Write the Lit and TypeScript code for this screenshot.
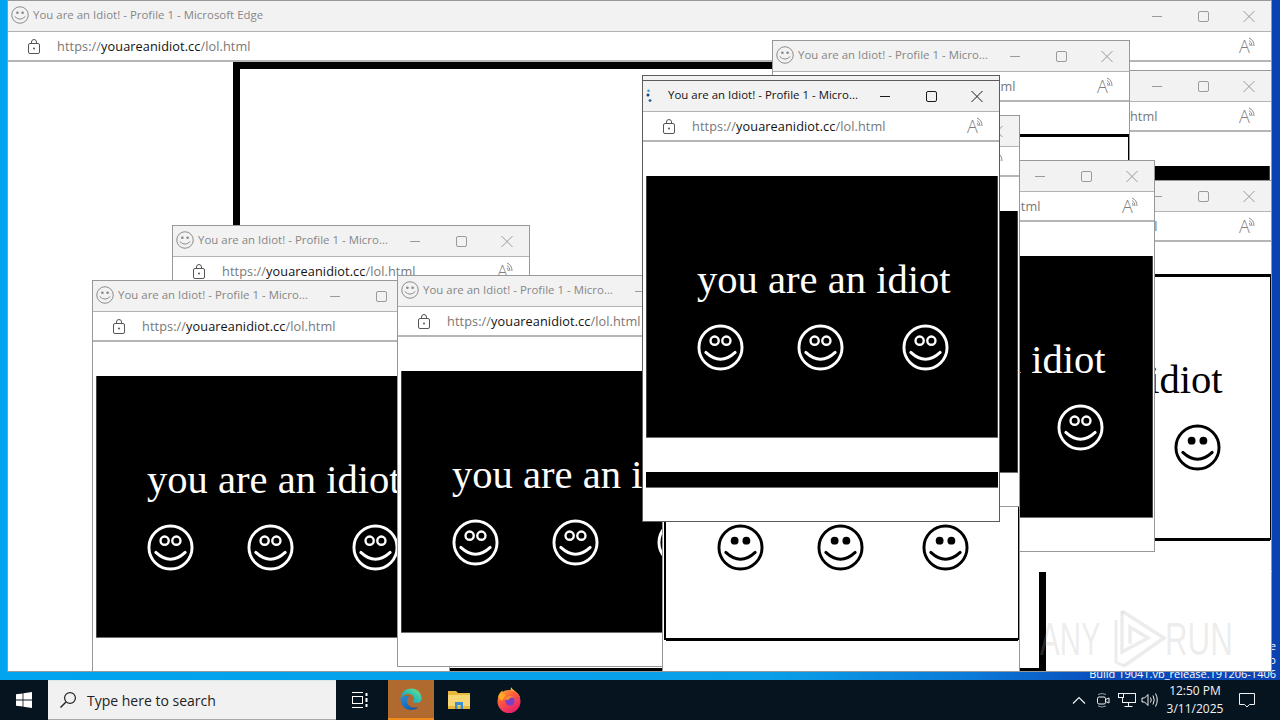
import { LitElement, html, css, svg } from 'lit';
import { customElement, property } from 'lit/decorators.js';

const smile = (filled: boolean) => svg`
  <circle cx="24" cy="24" r="22" fill="none" stroke="currentColor" stroke-width="3"/>
  ${filled
    ? svg`<circle cx="18" cy="17" r="4" fill="currentColor"/><circle cx="30" cy="17" r="4" fill="currentColor"/>`
    : svg`<circle cx="18" cy="17" r="4.2" fill="none" stroke="currentColor" stroke-width="2.4"/><circle cx="30" cy="17" r="4.2" fill="none" stroke="currentColor" stroke-width="2.4"/>`}
  <path d="M9 29 Q24 43 39 29" fill="none" stroke="currentColor" stroke-width="3" stroke-linecap="round"/>
`;

@customElement('idiot-window')
export class IdiotWindow extends LitElement {
  static styles = css`
    :host { display: block; position: absolute; }
    .win {
      width: 100%; height: 100%; box-sizing: border-box; overflow: hidden;
      background: #fff; border: 1px solid #989898;
      font-family: 'Open Sans', sans-serif;
    }
    .win.active { border-color: #5c5c5c; }
    .win.open { border-bottom-color: transparent; }
    .title {
      height: 31px; box-sizing: border-box; background: #f2f2f2;
      border-bottom: 1px solid #b3b3b3;
      display: flex; align-items: center; color: #868686; font-size: 11.4px;
    }
    .active .title { color: #111; }
    .fav { width: 18px; height: 18px; margin: 0 0 2px 3px; color: #8a8a8a; flex: none; }
    .spin { width: 18px; height: 18px; margin-left: 3px; flex: none; }
    .title-text { margin: 0 0 4px 4px; white-space: nowrap; flex: 1; letter-spacing: .03px; }
    .ctl { width: 46px; height: 30px; flex: none; color: #9a9a9a; }
    .active .ctl { color: #1a1a1a; }
    .addr {
      height: 30px; box-sizing: border-box; border-bottom: 2px solid #b5b5b5;
      display: flex; align-items: center; background: #fff;
    }
    .lock { width: 14px; height: 16px; margin-left: 19px; flex: none; color: #555; }
    .url {
      margin-left: 16px; flex: 1; font-size: 12.7px; color: #777; white-space: nowrap;
      letter-spacing: .1px;
    }
    .url b { font-weight: 400; color: #111; }
    .read { width: 21px; margin-right: 11px; flex: none; display: flex; color: #808080; }
    .read span { font-size: 18px; font-weight: 300; line-height: 19px; }
    .read svg { width: 8px; height: 11px; margin-left: -2px; }

    .panel {
      width: 352px; height: 262px; margin: 34px 0 0 3px; box-sizing: border-box;
      padding: 81px 0 0 51px; font-family: 'Liberation Serif', serif;
    }
    .panel.black { background: #000; color: #fff; box-shadow: inset 0 -1px 0 #6e6e6e, inset 1px 0 0 #444, inset -1px 0 0 #444; }
    .panel.white { background: #fff; color: #000; outline: 2px solid #000; box-shadow: 0 3px 0 #000, inset 0 1px 0 #000; }
    .say { font-size: 40.6px; line-height: 46px; white-space: nowrap; }
    .faces { display: flex; margin-top: 21px; }
    .faces svg { width: 47px; height: 47px; flex: none; }
    .faces svg:nth-child(2) { margin-left: 53px; }
    .faces svg:nth-child(3) { margin-left: 58px; }
    .bar { width: 352px; height: 16px; margin: 34px 0 0 3px; background: #000; box-shadow: inset 0 -1px 0 #6e6e6e; }

    .big-frame {
      margin: 0 0 0 225px; width: 813px; height: 613px; box-sizing: border-box;
      border: 7px solid #000; background: #fff;
    }
  `;

  @property() heading = '';
  @property({ type: Boolean }) active = false;
  @property({ type: Boolean }) loading = false;
  @property({ type: Boolean }) bare = false;
  @property({ type: Boolean }) open = false;
  @property() kind = 'black';
  @property({ type: Boolean }) trailing = false;

  private page() {
    if (this.kind === 'big') return html`<div class="big-frame"></div>`;
    const filled = this.kind === 'white';
    return html`
      <div class="panel ${this.kind}">
        <div class="say">you are an idiot</div>
        <div class="faces">
          <svg viewBox="0 0 48 48">${smile(filled)}</svg>
          <svg viewBox="0 0 48 48">${smile(filled)}</svg>
          <svg viewBox="0 0 48 48">${smile(filled)}</svg>
        </div>
      </div>
      ${this.trailing ? html`<div class="bar"></div>` : ''}
    `;
  }

  render() {
    if (this.bare) return html`<div class="win active"><div class="title"></div></div>`;
    return html`
      <div class="win ${this.active ? 'active' : ''} ${this.open ? 'open' : ''}">
        <div class="title">
          ${this.loading
            ? html`<svg class="spin" viewBox="0 0 18 18">
                <circle cx="2.500" cy="3.700" r="1.300" fill="#3a9bd8"/>
                <circle cx="2" cy="8" r="1.500" fill="#14487c"/>
                <circle cx="4" cy="13.600" r="1.400" fill="#1f5f9e"/>
              </svg>`
            : html`<svg class="fav" viewBox="0 0 48 48">
                <circle cx="24" cy="24" r="22" fill="none" stroke="currentColor" stroke-width="2.600"/>
                <circle cx="17" cy="18" r="3.600" fill="currentColor"/>
                <circle cx="31" cy="18" r="3.600" fill="currentColor"/>
                <path d="M10 28 Q24 42 38 28" fill="none" stroke="currentColor" stroke-width="2.600"/>
              </svg>`}
          <span class="title-text">${this.heading}</span>
          <svg class="ctl" viewBox="0 0 46 30"><path d="M19 15.500h10" stroke="currentColor" fill="none"/></svg>
          <svg class="ctl" viewBox="0 0 46 30"><rect x="19.500" y="10.500" width="10" height="10" rx="1.500" stroke="currentColor" fill="none"/></svg>
          <svg class="ctl" viewBox="0 0 46 30"><path d="M18.500 10l11 11M29.500 10l-11 11" stroke="currentColor" fill="none"/></svg>
        </div>
        <div class="addr">
          <svg class="lock" viewBox="0 0 14 16">
            <rect x="1.500" y="5.500" width="11" height="10" rx="1.500" fill="none" stroke="currentColor"/>
            <path d="M4.500 5.500V4a2.500 2.500 0 0 1 5 0v1.500" fill="none" stroke="currentColor"/>
            <circle cx="7" cy="10.500" r="1" fill="currentColor"/>
          </svg>
          <span class="url">https://<b>youareanidiot.cc</b>/lol.html</span>
          <span class="read"><span>A</span><svg viewBox="0 0 8 11">
            <path d="M1 1Q6 3 6 9M1 3.500Q4 5 4 9M1 6Q2.200 6.500 2.200 9" fill="none" stroke="currentColor" stroke-width=".9"/>
          </svg></span>
        </div>
        ${this.page()}
      </div>
    `;
  }
}

const SHORT = 'You are an Idiot! - Profile 1 - Micro...';

// back to front, as they are piled on the desktop
const WINDOWS = [
  { x: 7, y: 0, w: 1265, h: 672, kind: 'big', heading: 'You are an Idiot! - Profile 1 - Microsoft Edge' },
  { x: 914, y: 70, w: 358, h: 392, kind: 'black' },
  { x: 914, y: 180, w: 358, h: 392, kind: 'white', open: true },
  { x: 772, y: 40, w: 358, h: 392, kind: 'white' },
  { x: 172, y: 225, w: 358, h: 392, kind: 'black' },
  { x: 797, y: 160, w: 358, h: 392, kind: 'black' },
  { x: 92, y: 280, w: 358, h: 392, kind: 'black' },
  { x: 397, y: 275, w: 358, h: 392, kind: 'black' },
  { x: 662, y: 280, w: 358, h: 392, kind: 'white' },
  { x: 662, y: 115, w: 358, h: 392, kind: 'black' },
];

@customElement('app-root')
export class AppRoot extends LitElement {
  static styles = css`
    :host { display: block; width: 1280px; height: 720px; overflow: hidden; font-family: 'Open Sans', sans-serif; }
    .screen { display: flex; flex-direction: column; width: 1280px; height: 720px; }
    .desktop {
      flex: 1; position: relative; overflow: hidden;
      background: linear-gradient(90deg, #00a4ef 0%, #0a9fe8 60%, #0b7ad8 76%, #0a4dbc 86%, #0a42b2 100%);
    }
    .stamp {
      position: absolute; right: 4px; bottom: -1px; text-align: right;
      color: #fff; font-size: 11px; line-height: 14px; white-space: nowrap;
    }
    .mark { position: absolute; left: 1040px; top: 608px; width: 194px; height: 62px; color: rgba(176,176,176,.24); }
    .mark span {
      position: absolute; top: 4px; font-family: 'Liberation Sans', sans-serif;
      font-size: 46px; line-height: 54px; transform-origin: 0 50%;
    }
    .mark .l { left: 0; transform: scaleX(.64); }
    .mark .r { left: 125px; transform: scaleX(.68); }
    .mark svg { position: absolute; left: 68px; top: 0; width: 60px; height: 62px; }

    .taskbar { height: 40px; flex: none; display: flex; align-items: stretch; background: #06141f; color: #fff; }
    .start { width: 48px; display: flex; align-items: center; justify-content: center; }
    .start svg { width: 16px; height: 16px; }
    .search {
      width: 288px; box-sizing: border-box; background: #f1f1f1; display: flex; align-items: center;
      border-top: 1px solid #dfe8df; border-bottom: 1px solid #a8a8a8;
      color: #222; font-size: 14px;
    }
    .search svg { width: 18px; height: 18px; margin: 0 10px 0 11px; color: #222; }
    .tv { width: 48px; display: flex; align-items: center; justify-content: center; }
    .tv svg { width: 18px; height: 16px; }
    .app { display: flex; align-items: center; justify-content: center; width: 50px; flex: none; }
    .app svg { width: 26px; height: 26px; }
    .app.on { width: 46px; margin-left: 4px; box-sizing: border-box; background: #b06a30; border-bottom: 2px solid #f28a1a; }
    .tray { margin-left: auto; display: flex; align-items: center; }
    .tray svg { flex: none; color: #f2f2f2; }
    .chev { width: 14px; height: 8px; margin-right: 9px; }
    .meet { width: 16px; height: 16px; margin-right: 7px; }
    .net { width: 18px; height: 16px; margin-right: 5px; }
    .vol { width: 18px; height: 16px; margin-right: 6px; }
    .clock { width: 60px; text-align: center; font-size: 12px; line-height: 18px; color: #f2f2f2; margin-right: 14px; }
    .note { width: 16px; height: 16px; margin-right: 25px; }
  `;

  render() {
    return html`
      <div class="screen">
        <div class="desktop">
          <div class="stamp">
            <div>Test Mode</div>
            <div>Windows 10 Pro</div>
            <div>Build 19041.vb_release.191206-1406</div>
          </div>
          ${WINDOWS.map(w => html`
            <idiot-window style="left:${w.x}px;top:${w.y}px;width:${w.w}px;height:${w.h}px"
              ?open=${w.open} .kind=${w.kind} .heading=${w.heading ?? SHORT}></idiot-window>`)}
          <idiot-window bare style="left:642px;top:75px;width:358px;height:10px"></idiot-window>
          <idiot-window active loading trailing style="left:642px;top:80px;width:358px;height:442px"
            .kind=${'black'} .heading=${SHORT}></idiot-window>
          <div class="mark">
            <span class="l">ANY</span>
            <svg viewBox="0 0 60 62">
              <path d="M14 3L56 30L16 58" fill="none" stroke="currentColor" stroke-width="3.500"/>
              <path d="M14 3V44L40 30L22 19V36" fill="none" stroke="currentColor" stroke-width="3.500"/>
              <path d="M8 12V54L16 58" fill="none" stroke="currentColor" stroke-width="3"/>
            </svg>
            <span class="r">RUN</span>
          </div>
        </div>
        <div class="taskbar">
          <div class="start">
            <svg viewBox="0 0 16 16" fill="#fff"><path d="M0 2.300l6.600-.9v6.200H0zM7.400 1.300L16 0v7.600H7.400zM0 8.400h6.600v6.200L0 13.700zM7.400 8.400H16V16l-8.600-1.300z"/></svg>
          </div>
          <div class="search">
            <svg viewBox="0 0 18 18"><circle cx="11" cy="7" r="5.400" fill="none" stroke="currentColor" stroke-width="1.200"/><path d="M7 11l-5.500 5.500" stroke="currentColor" stroke-width="1.400"/></svg>
            <span>Type here to search</span>
          </div>
          <div class="tv">
            <svg viewBox="0 0 18 16" fill="none" stroke="#fff"><path d="M1 .5h11M1 15.500h11"/><rect x="1.500" y="4.500" width="10" height="7"/><path d="M15.500 1v3M15.500 6v4M15.500 12v3" stroke-width="2"/></svg>
          </div>
          <div class="app on">
            <svg viewBox="0 0 32 32">
              <defs>
                <linearGradient id="eg" x1="0" y1="1" x2="1" y2="0"><stop offset="0" stop-color="#1c86c8"/><stop offset=".55" stop-color="#2fc3b0"/><stop offset="1" stop-color="#7fe07a"/></linearGradient>
                <linearGradient id="eb" x1="0" y1="0" x2="1" y2="1"><stop offset="0" stop-color="#2a8fd8"/><stop offset="1" stop-color="#0c4f9e"/></linearGradient>
              </defs>
              <path fill="url(#eg)" d="M3 15C4 7 10 3 16.500 3C24 3 29 9 29 15C29 19 26 21 22 21C19.500 21 18 20 18 19C20 17.500 20.500 15.500 19 13C17 10 13 9 10 10C6.500 11 4 13 3 15Z"/>
              <path fill="url(#eb)" d="M3 15C3 24 9 29.500 16 29.500C20 29.500 23.500 28 25.500 25.500C21.500 27.300 15.500 27 12.500 23C10 19.500 10.500 15.500 14 13C8.500 11.500 3.500 13 3 15Z"/>
            </svg>
          </div>
          <div class="app">
            <svg viewBox="0 0 26 26">
              <path fill="#e8b93c" d="M2 4h8l2 2h12v6H2z"/>
              <rect x="2" y="8" width="22" height="14" fill="#f7d774"/>
              <rect x="2" y="19" width="22" height="3" fill="#e8b93c"/>
              <path fill="#3a8fd0" d="M9 15h8v7h-2.400v-4h-3.200v4H9z"/>
            </svg>
          </div>
          <div class="app">
            <svg viewBox="0 0 26 26">
              <defs>
                <linearGradient id="ff" x1="0" y1="0" x2=".6" y2="1"><stop offset="0" stop-color="#ffb22e"/><stop offset=".45" stop-color="#ff5a3c"/><stop offset="1" stop-color="#e6206e"/></linearGradient>
              </defs>
              <path fill="#ffcb2e" d="M15 0C16 3 21.500 4.500 24 10L14 8z"/>
              <circle cx="13" cy="14.500" r="11.500" fill="url(#ff)"/>
              <path fill="#ffa726" d="M2 10C3 6 5 4.500 6.500 3.500C6.500 5.500 8 7 10 7.500L6 14z"/>
              <circle cx="14" cy="14" r="4.600" fill="#7a3fc8"/>
              <path fill="#ff8a2a" d="M8 12.500C9.500 9 15 7.500 19 10.500C15.500 10 13.500 11 12.500 13C10.500 12.500 9 12.500 8 12.500Z"/>
            </svg>
          </div>
          <div class="tray">
            <svg class="chev" viewBox="0 0 14 8"><path d="M1 7.500l6-6 6 6" fill="none" stroke="currentColor" stroke-width="1.200"/></svg>
            <svg class="meet" viewBox="0 0 16 16" fill="none" stroke="currentColor"><rect x="2.500" y="5" width="8" height="7" rx="1.500"/><path d="M10.500 7.500l3.500-1.500v5l-3.500-1.500"/><path d="M3 2.500Q7 .5 11 2.500M3 14Q7 16 11 14" stroke-opacity=".6"/></svg>
            <svg class="net" viewBox="0 0 18 16" fill="none" stroke="currentColor"><rect x="4.500" y="1.500" width="13" height="9"/><rect x=".5" y="1.500" width="5" height="4" fill="#06141f"/><path d="M10.500 10.500v3.500M6.500 14.500h8"/></svg>
            <svg class="vol" viewBox="0 0 18 16" fill="none" stroke="currentColor"><path d="M1 6h2.500L7 2.500v11L3.500 10H1z"/><path d="M9.500 5.500Q11 8 9.500 10.500M12 3.500Q14.500 8 12 12.500M14.500 1.500Q18 8 14.500 14.500"/></svg>
            <div class="clock">12:50 PM<br>3/11/2025</div>
            <svg class="note" viewBox="0 0 16 16" fill="none" stroke="currentColor"><path d="M.5 1.500h15v11h-5l-2.500 2.500-2.500-2.500h-5z"/></svg>
          </div>
        </div>
      </div>
    `;
  }
}
